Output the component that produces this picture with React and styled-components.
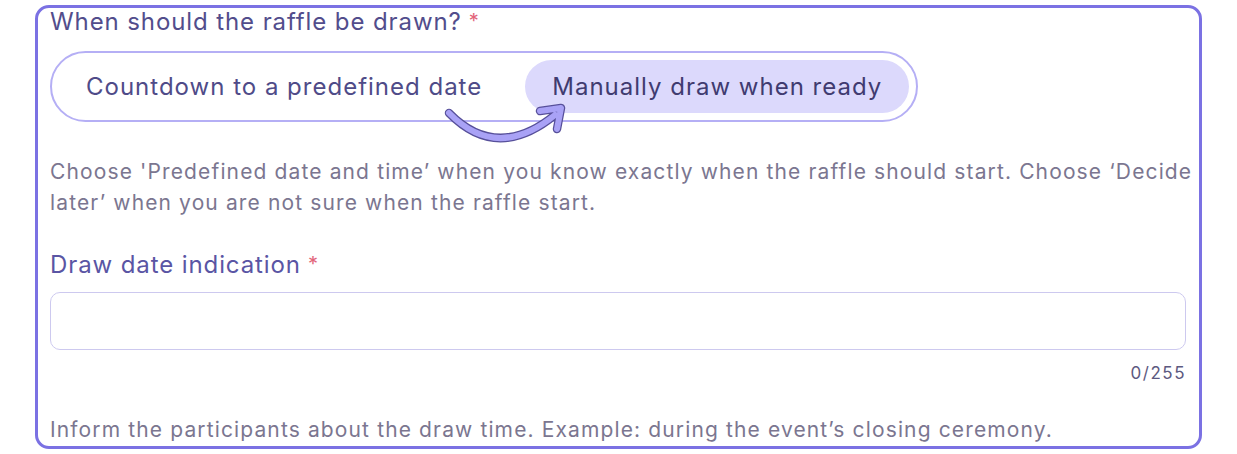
import { useState } from "react";
import styled, { createGlobalStyle } from "styled-components";

const GlobalStyle = createGlobalStyle`
  html, body {
    margin: 0;
    background: #ffffff;
  }
  body {
    font-family: Inter, "Noto Sans", sans-serif;
  }
`;

const Frame = styled.section`
  box-sizing: border-box;
  width: 1167px;
  height: 444px;
  margin: 5px 0 0 35px;
  padding: 0 13px 0 12px;
  border: 3px solid #7b71e3;
  border-radius: 14px;
  overflow: hidden;
`;

const Label = styled.h2`
  margin: ${(p) => p.$top || 0}px 0 0;
  font-size: 24px;
  font-weight: 400;
  letter-spacing: 0.9px;
  line-height: ${(p) => p.$lh || 30}px;
  color: ${(p) => p.$color || "#524d8c"};
`;

const Star = styled.span`
  color: #e2647a;
  font-size: 20px;
  margin-left: 7px;
  vertical-align: 2px;
`;

const Toggle = styled.div`
  position: relative;
  display: inline-flex;
  gap: 16px;
  box-sizing: border-box;
  height: 71px;
  margin-top: 16px;
  padding: 7px;
  border: 2px solid #b5aff5;
  border-radius: 36px;
`;

const Option = styled.button`
  display: flex;
  align-items: center;
  padding: 0 27px;
  border: none;
  border-radius: 27px;
  background: ${(p) => (p.$active ? "#dcd9fc" : "transparent")};
  color: ${(p) => (p.$active ? "#403b70" : "#4f4b88")};
  font-family: inherit;
  font-size: 24px;
  letter-spacing: 1px;
  cursor: pointer;
`;

const Arrow = styled.svg`
  position: absolute;
  left: 388px;
  top: 52px;
  width: 130px;
  height: 40px;
  overflow: visible;
  pointer-events: none;
`;

const Help = styled.p`
  margin: ${(p) => p.$top}px -12px 0 0;
  font-size: 21px;
  letter-spacing: 1.13px;
  line-height: 31px;
  color: #7b7690;
`;

const TextInput = styled.input`
  display: block;
  box-sizing: border-box;
  width: 100%;
  height: 58px;
  margin-top: 12px;
  padding: 0 16px;
  border: 1px solid #cdc9ef;
  border-radius: 10px;
  font-family: inherit;
  font-size: 20px;
  color: #403b70;
  outline: none;
`;

const Counter = styled.div`
  margin-top: 12px;
  text-align: right;
  font-size: 17px;
  letter-spacing: 1.5px;
  line-height: 22px;
  color: #5d5980;
`;

const arrowPath = "M9 8 Q 57 57 115 10 M100 6 L121 3 L117 24";

export default function App() {
  const [mode, setMode] = useState("manual");
  const [value, setValue] = useState("");

  return (
    <>
      <GlobalStyle />
      <Frame>
        <Label $lh={26}>
          When should the raffle be drawn?<Star>*</Star>
        </Label>
        <Toggle>
          <Option $active={mode === "countdown"} onClick={() => setMode("countdown")}>
            Countdown to a predefined date
          </Option>
          <Option $active={mode === "manual"} onClick={() => setMode("manual")}>
            Manually draw when ready
          </Option>
          <Arrow viewBox="0 0 130 40" fill="none" strokeLinecap="round" strokeLinejoin="round">
            <path d={arrowPath} stroke="#57509a" strokeWidth="8.5" />
            <path d={arrowPath} stroke="#a9a2f6" strokeWidth="6" />
          </Arrow>
        </Toggle>
        <Help $top={34}>
          Choose 'Predefined date and time’ when you know exactly when the raffle should start. Choose ‘Decide
          later’ when you are not sure when the raffle start.
        </Help>
        <Label $top={31} $color="#5a55a4">
          Draw date indication<Star>*</Star>
        </Label>
        <TextInput value={value} maxLength={255} onChange={(e) => setValue(e.target.value)} />
        <Counter>{value.length}/255</Counter>
        <Help $top={30}>
          Inform the participants about the draw time. Example: during the event’s closing ceremony.
        </Help>
      </Frame>
    </>
  );
}
